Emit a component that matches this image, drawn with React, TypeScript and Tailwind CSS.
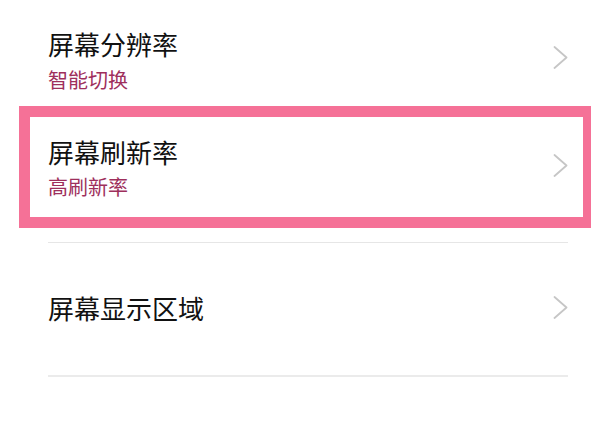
import React from "react";

const Chevron = () => (
  <svg width="15" height="23" viewBox="0 0 15 23" fill="none">
    <polyline points="1.5,1 13.5,11.5 1.5,22" stroke="#c6c6c6" strokeWidth="1.8" strokeLinecap="round" strokeLinejoin="round" />
  </svg>
);

export default function App() {
  return (
    <div
      className="w-[607px] h-[421px] bg-white overflow-hidden flex flex-col"
      style={{ fontFamily: '"Noto Sans CJK SC", "Noto Sans", sans-serif' }}
    >
      {/* Row 1 */}
      <div className="h-[106px] flex pl-[48px] pr-[39px] shrink-0">
        <div className="flex-1 flex flex-col pt-[28px] gap-[8px]">
          <div className="text-[26px] leading-[32px] text-[#111111]">屏幕分辨率</div>
          <div className="text-[20px] leading-[24px] text-[#9e2f5c]">智能切换</div>
        </div>
        <div className="pt-[46px]">
          <Chevron />
        </div>
      </div>

      {/* Row 2 highlighted */}
      <div className="ml-[19px] w-[572px] h-[122px] shrink-0 border-l-[11px] border-r-[8px] border-y-[11px] border-[#f57197] bg-white flex pl-[18px] pr-[15px]">
        <div className="flex-1 flex flex-col pt-[19px] gap-[7px]">
          <div className="text-[26px] leading-[32px] text-[#111111]">屏幕刷新率</div>
          <div className="text-[20px] leading-[24px] text-[#9e2f5c]">高刷新率</div>
        </div>
        <div className="pt-[37px]">
          <Chevron />
        </div>
      </div>

      <div className="mt-[14px] ml-[48px] mr-[39px] h-[1px] bg-[#e6e6e6] shrink-0" />

      {/* Row 3 */}
      <div className="h-[132px] flex items-center pl-[48px] pr-[39px] shrink-0">
        <div className="flex-1 text-[26px] leading-[32px] text-[#111111] -mt-[2px]">屏幕显示区域</div>
        <div className="-mt-[4px]">
          <Chevron />
        </div>
      </div>

      <div className="ml-[48px] mr-[39px] h-[2px] bg-[#ebebeb] shrink-0" />
    </div>
  );
}
